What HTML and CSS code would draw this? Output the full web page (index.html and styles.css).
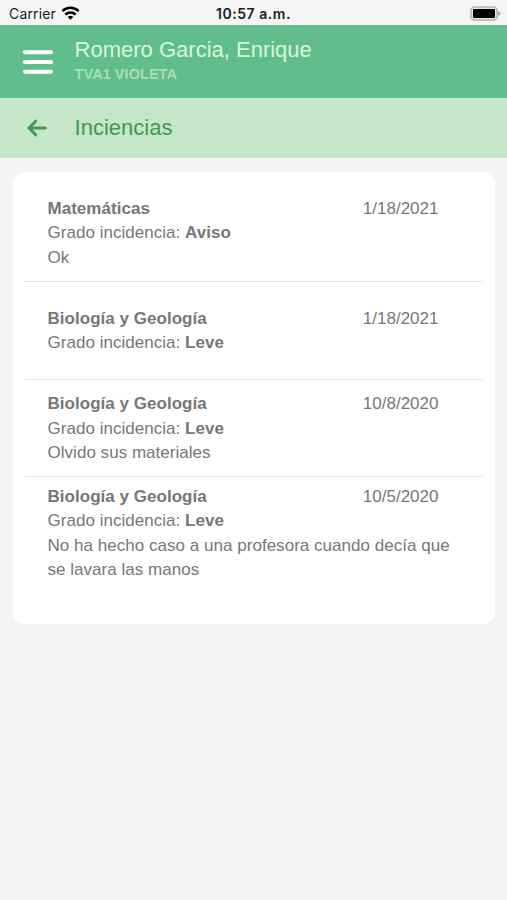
FILE: index.html
```html
<!DOCTYPE html>
<html lang="es">
<head>
<meta charset="utf-8">
<title>Inciencias</title>
<link rel="stylesheet" href="styles.css">
</head>
<body>
<div class="status">
  <div class="carrier"><span>Carrier</span>
    <svg class="wifi" width="19" height="14" viewBox="0 0 18 14" fill="none" stroke="#000" stroke-width="2.5"><path d="M.9 5.2a11.5 11.5 0 0 1 16.2 0M3.8 8.6a7.4 7.4 0 0 1 10.4 0"/><path d="M9 13.8 6.2 11a4 4 0 0 1 5.6 0z" fill="#000" stroke="none"/></svg>
  </div>
  <time class="clock">10:57 a.m.</time>
  <svg class="battery" width="32" height="15" viewBox="0 0 32 15"><rect x="1" y="1" width="26" height="13" rx="3.5" fill="#e6e6e6" stroke="#b4b4b4" stroke-width="1.5"/><rect x="3" y="3" width="22" height="9" rx="1"/><path d="M28 5q2.5 1 2.5 2.5t-2.5 2.5z" fill="#aaa"/></svg>
</div>
<header class="header">
  <svg class="menu" width="30" height="26" viewBox="0 0 30 26" stroke="#fff" stroke-width="4" stroke-linecap="round"><path d="M2 3.2h26M2 12.9h26M2 22.7h26"/></svg>
  <div>
    <h1 class="name">Romero Garcia, Enrique</h1>
    <p class="group">TVA1 VIOLETA</p>
  </div>
</header>
<nav class="subheader">
  <svg class="back" width="20" height="18" viewBox="0 0 20 18" fill="none" stroke="#3f9a50" stroke-width="3" stroke-linecap="round" stroke-linejoin="round"><path d="M18.3 9H2M8.6 2.2 2 9l6.6 6.8"/></svg>
  <h2 class="title">Inciencias</h2>
</nav>
<main class="card">
  <article class="row first">
    <div class="top"><b>Matemáticas</b><time>1/18/2021</time></div>
    <p>Grado incidencia: <b>Aviso</b></p>
    <p>Ok</p>
  </article>
  <article class="row">
    <div class="top"><b>Biología y Geología</b><time>1/18/2021</time></div>
    <p>Grado incidencia: <b>Leve</b></p>
  </article>
  <article class="row">
    <div class="top"><b>Biología y Geología</b><time>10/8/2020</time></div>
    <p>Grado incidencia: <b>Leve</b></p>
    <p>Olvido sus materiales</p>
  </article>
  <article class="row last">
    <div class="top"><b>Biología y Geología</b><time>10/5/2020</time></div>
    <p>Grado incidencia: <b>Leve</b></p>
    <p>No ha hecho caso a una profesora cuando decía que se lavara las manos</p>
  </article>
</main>
</body>
</html>
```
FILE: styles.css
```css
* { box-sizing: border-box; }
body { margin: 0; min-height: 900px; background: #f4f4f4; font-family: "Liberation Sans", Arial, sans-serif; color: #777; }
h1, h2, p { margin: 0; font-weight: normal; }
.status { display: grid; grid-template-columns: 1fr auto 1fr; align-items: center; height: 25px; padding: 2px 5px 0 9px; background: #f5f5f5; color: #1c1c1c; font-family: Inter, sans-serif; font-size: 14px; line-height: 22px; }
.carrier { display: flex; align-items: center; gap: 5px; letter-spacing: .15px; }
.wifi { margin-top: -2px; }
.clock { margin-left: -4px; font-weight: 600; letter-spacing: .55px; }
.battery { justify-self: end; }
.header { display: flex; align-items: flex-start; gap: 22px; height: 73px; padding: 11px 22.6px 0; background: #61bd8c; }
.menu { margin-top: 13px; }
.name { color: #d6f7da; font-size: 22px; line-height: 28px; }
.group { margin-top: 2px; color: #a5e0b4; font-size: 14.5px; font-weight: bold; line-height: 16px; letter-spacing: .05px; }
.subheader { display: flex; align-items: center; gap: 27.6px; height: 60px; padding-left: 27px; background: #c6e6c9; }
.title { color: #3f9a50; font-size: 22px; line-height: 28px; }
.card { margin: 14px 12px 0 13px; padding: 12px; height: 452px; border-radius: 12px; background: #fff; font-size: 17px; line-height: 24.5px; letter-spacing: .03px; }
.row { display: flex; flex-direction: column; justify-content: center; height: 97.8px; padding: 2.4px 22px 0 22.5px; border-bottom: 1.5px solid #e3e3e3; }
.top { display: flex; justify-content: space-between; padding-right: 22.5px; }
.top time { letter-spacing: 0; }
.last { height: 110px; border: 0; }
```
